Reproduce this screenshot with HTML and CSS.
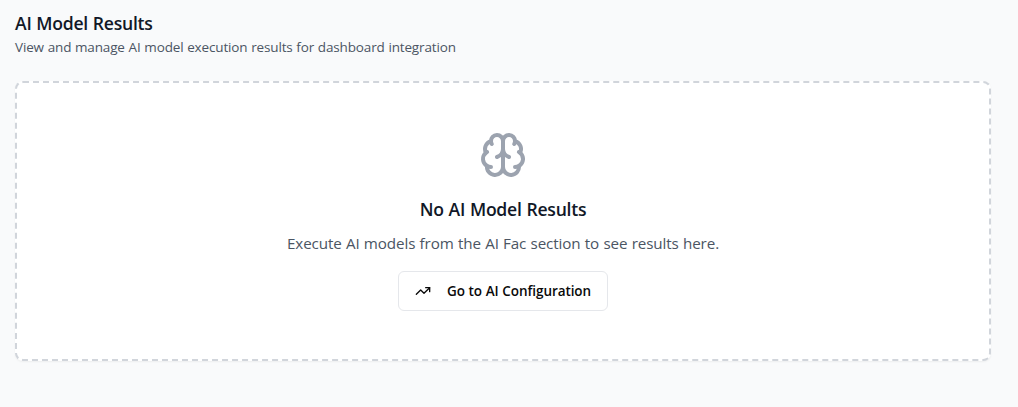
FILE: index.html
```html
<!DOCTYPE html>
<html lang="en">
<head>
<meta charset="utf-8">
<title>AI Model Results</title>
<link rel="stylesheet" href="styles.css">
</head>
<body>
<main class="page">
  <header class="header">
    <h2 class="title">AI Model Results</h2>
    <p class="subtitle">View and manage AI model execution results for dashboard integration</p>
  </header>
  <section class="empty">
    <svg class="brain" viewBox="0 0 24 24" fill="none" stroke="currentColor" stroke-width="2" stroke-linecap="round" stroke-linejoin="round" aria-hidden="true">
      <path d="M12 5a3 3 0 1 0-5.997.125 4 4 0 0 0-2.526 5.77 4 4 0 0 0 .556 6.588A4 4 0 1 0 12 18Z"/>
      <path d="M12 5a3 3 0 1 1 5.997.125 4 4 0 0 1 2.526 5.77 4 4 0 0 1-.556 6.588A4 4 0 1 1 12 18Z"/>
      <path d="M15 13a4.5 4.5 0 0 1-3-4 4.5 4.5 0 0 1-3 4"/>
      <path d="M17.599 6.5a3 3 0 0 0 .399-1.375"/>
      <path d="M6.003 5.125A3 3 0 0 0 6.401 6.5"/>
      <path d="M3.477 10.896a4 4 0 0 1 .585-.396"/>
      <path d="M19.938 10.5a4 4 0 0 1 .585.396"/>
      <path d="M6 18a4 4 0 0 1-1.967-.516"/>
      <path d="M19.967 17.484A4 4 0 0 1 18 18"/>
    </svg>
    <h3 class="empty-title">No AI Model Results</h3>
    <p class="empty-text">Execute AI models from the AI Fac section to see results here.</p>
    <button class="button" type="button">
      <svg class="trend" viewBox="0 0 24 24" fill="none" stroke="currentColor" stroke-width="2" stroke-linecap="round" stroke-linejoin="round" aria-hidden="true">
        <polyline points="22 7 13.5 15.5 8.5 10.5 2 17"/>
        <polyline points="16 7 22 7 22 13"/>
      </svg>
      <span class="button-label">Go to AI Configuration</span>
    </button>
  </section>
</main>
</body>
</html>
```
FILE: styles.css
```css
* { box-sizing: border-box; }
body { margin: 0; background: #f9fafb; color: #111827; font-family: "Open Sans", "Noto Sans", sans-serif; }
h2, h3, p { margin: 0; white-space: nowrap; }
.page { min-height: 407px; padding: 9px 27px 0 15px; }
.header { height: 72px; }
.title { font-size: 17.6px; line-height: 29px; font-weight: 600; letter-spacing: -0.25px; word-spacing: 0.5px; }
.subtitle { font-size: 13.5px; line-height: 19px; color: #4b5563; letter-spacing: -0.15px; word-spacing: 0.4px; }
.empty { height: 280px; display: flex; flex-direction: column; align-items: center; padding-top: 48px; background: #fff; border: 2px dashed #d1d5db; border-radius: 8px; box-shadow: 0 1px 2px rgba(0, 0, 0, 0.05); }
.brain { width: 48px; height: 48px; color: #9ca3af; flex: none; }
.empty-title { margin-top: 16px; font-size: 17.6px; line-height: 28px; font-weight: 600; letter-spacing: -0.25px; word-spacing: 0.5px; }
.empty-text { margin-top: 8px; font-size: 15.2px; line-height: 24px; color: #4b5563; letter-spacing: -0.1px; word-spacing: 0.4px; }
.button { margin-top: 16px; width: 210px; height: 40px; padding: 0 16px; display: flex; align-items: center; background: #fff; border: 1px solid #e5e7eb; border-radius: 6px; color: #0a0a0a; font: 600 13.5px/20px "Open Sans", "Noto Sans", sans-serif; }
.trend { width: 16px; height: 16px; margin-right: 16px; flex: none; }
.button-label { white-space: nowrap; letter-spacing: -0.08px; word-spacing: 0.3px; }
```
